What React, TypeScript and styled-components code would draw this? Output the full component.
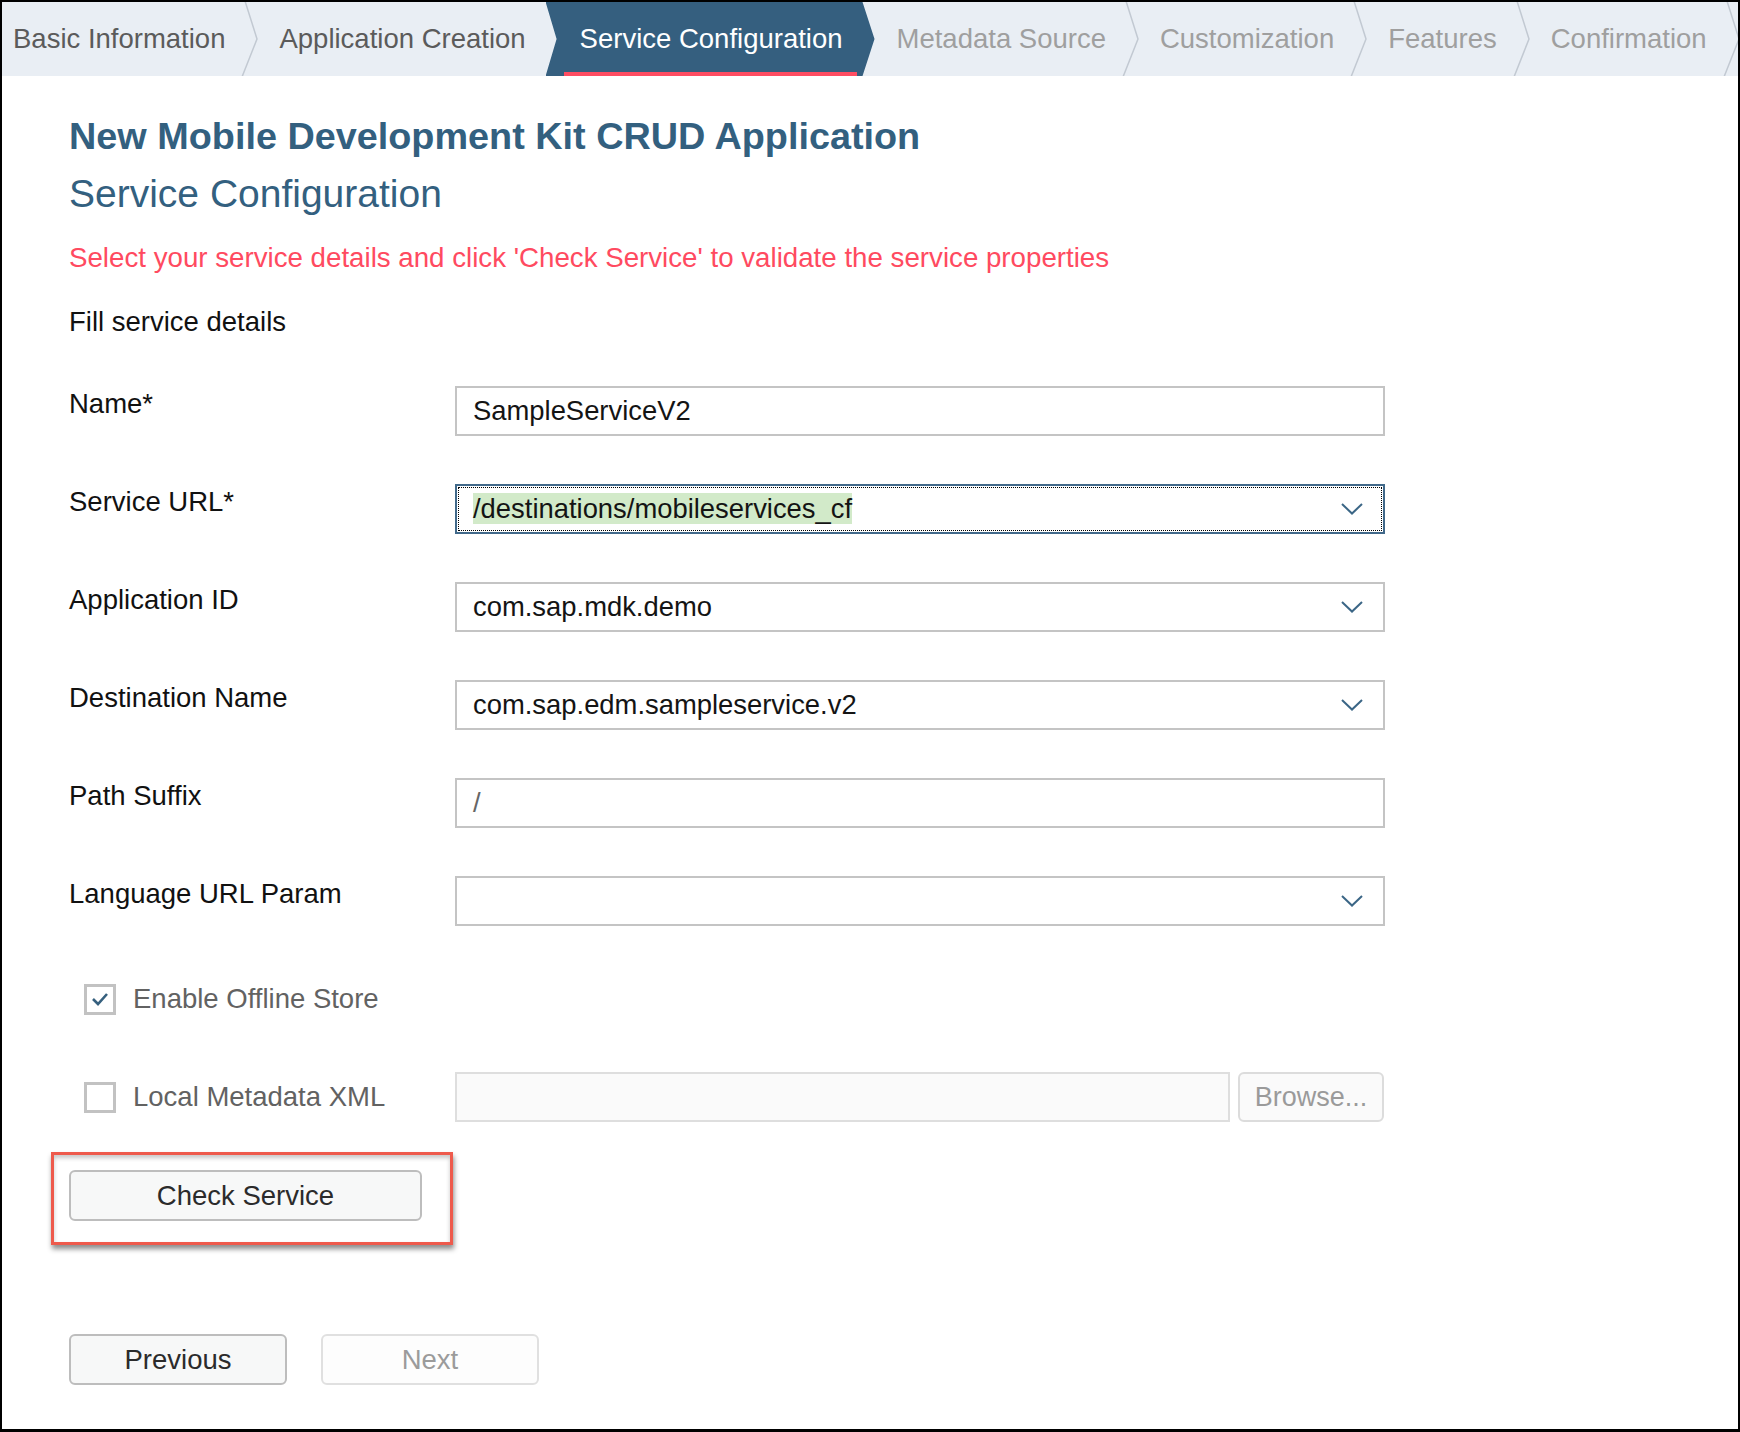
import React from "react";
import styled, { createGlobalStyle, css } from "styled-components";

const GlobalStyle = createGlobalStyle`
  html, body { margin: 0; padding: 0; background: #ffffff; }
  body { font-family: "Liberation Sans", Arial, sans-serif; }
  * { box-sizing: border-box; }
`;

const FONT = `"Liberation Sans", Arial, sans-serif`;

const Page = styled.div`
  width: 1740px;
  height: 1432px;
  border: 2px solid #000;
  border-bottom-width: 3px;
  background: #fff;
  font-family: ${FONT};
  overflow: hidden;
`;

const StepBar = styled.nav`
  display: flex;
  height: 74px;
  background: #e9eef4;
  overflow: hidden;
`;

type StepState = "done" | "active" | "todo";

const Step = styled.div<{ $state: StepState; $first?: boolean }>`
  position: relative;
  display: flex;
  align-items: center;
  height: 100%;
  padding: 0 20px 0 ${(p) => (p.$first ? 11 : 34)}px;
  font-size: 27.5px;
  white-space: nowrap;
  color: ${(p) =>
    p.$state === "done" ? "#5b5b5b" : p.$state === "active" ? "#ffffff" : "#9f9f9f"};
  z-index: ${(p) => (p.$state === "active" ? 2 : 1)};
  ${(p) =>
    p.$state === "active" &&
    css`
      &::before {
        content: "";
        position: absolute;
        top: 0;
        bottom: 0;
        left: 0;
        right: -12px;
        background: #355f7f;
        clip-path: polygon(0 0, calc(100% - 12px) 0, 100% 50%, calc(100% - 12px) 100%, 0 100%, 11px 50%);
      }
      &::after {
        content: "";
        position: absolute;
        left: 18px;
        right: 6px;
        bottom: 0;
        height: 4px;
        background: #ff4d62;
      }
    `}
`;

const StepText = styled.span`
  position: relative;
`;

const Separator = styled.svg`
  position: absolute;
  top: 0;
  left: 100%;
  width: 14px;
  height: 100%;
  overflow: visible;
`;

const Content = styled.main`
  display: flex;
  flex-direction: column;
  align-items: flex-start;
  padding: 0 0 0 67px;
`;

const Title = styled.h1`
  margin: 37px 0 0;
  font-size: 37.8px;
  line-height: 46px;
  font-weight: 700;
  color: #33607f;
`;

const Subtitle = styled.h2`
  margin: 11px 0 0;
  font-size: 39px;
  line-height: 47px;
  font-weight: 400;
  color: #33607f;
`;

const Instruction = styled.p`
  margin: 24px 0 0;
  font-size: 27.7px;
  line-height: 33px;
  color: #ff4a60;
`;

const SectionLabel = styled.p`
  margin: 31px 0 0;
  font-size: 27.5px;
  line-height: 33px;
  color: #111;
`;

const Form = styled.div`
  margin-top: 48px;
  display: grid;
  grid-template-columns: 386px 930px;
  grid-auto-rows: 50px;
  row-gap: 48px;
`;

const FieldLabel = styled.label`
  align-self: start;
  padding-top: 1px;
  font-size: 27.5px;
  line-height: 33px;
  color: #111;
`;

const Field = styled.div<{ $focused?: boolean; $select?: boolean }>`
  position: relative;
  display: flex;
  align-items: center;
  height: 50px;
  padding: 0 16px;
  border: 2px solid ${(p) => (p.$focused ? "#41698a" : "#c4c4c4")};
  background: #fff;
  font-size: 27.4px;
  color: #141414;
  ${(p) =>
    p.$focused &&
    css`
      outline: 1px dotted #000;
      outline-offset: -4px;
    `}
`;

const FieldValue = styled.span<{ $muted?: boolean }>`
  flex: 1;
  white-space: nowrap;
  color: ${(p) => (p.$muted ? "#666" : "#141414")};
`;

const Highlight = styled.span`
  background: #d2eac9;
`;

const Chevron = styled.svg`
  flex: none;
  width: 22px;
  height: 12px;
  margin-right: 4px;
`;

const CheckRow = styled.label`
  display: flex;
  align-items: center;
  gap: 17px;
  padding-left: 15px;
  font-size: 27.5px;
  color: #626262;
`;

const CheckBox = styled.span<{ $checked?: boolean }>`
  display: flex;
  align-items: center;
  justify-content: center;
  width: 32px;
  height: 31px;
  border: 3px solid #c2c2c2;
  background: #fff;
`;

const FileRow = styled.div`
  display: flex;
  gap: 8px;
  height: 50px;
`;

const FileField = styled.div`
  width: 775px;
  border: 2px solid #dedede;
  background: #fafafa;
`;

const BrowseButton = styled.button`
  width: 146px;
  height: 50px;
  border: 2px solid #dcdcdc;
  border-radius: 6px;
  background: #fafafa;
  font-family: ${FONT};
  font-size: 27px;
  color: #9a9a9a;
  padding: 0;
`;

const Callout = styled.div`
  margin: 30px 0 0 -18px;
  padding: 15px 28px 21px 15px;
  border: 3px solid #ee5a4c;
  box-shadow: 1px 4px 5px rgba(0, 0, 0, 0.45), inset 0 3px 4px rgba(0, 0, 0, 0.22);
`;

const Button = styled.button<{ $disabled?: boolean; $width: number }>`
  width: ${(p) => p.$width}px;
  height: 51px;
  border: 2px solid ${(p) => (p.$disabled ? "#e0e0e0" : "#bdbdbd")};
  border-radius: 6px;
  background: ${(p) => (p.$disabled ? "#fdfdfd" : "#f7f8f8")};
  font-family: ${FONT};
  font-size: 27.5px;
  color: ${(p) => (p.$disabled ? "#9b9b9b" : "#2b2b2b")};
  padding: 0;
`;

const NavButtons = styled.div`
  display: flex;
  gap: 34px;
  margin-top: 89px;
`;

const steps: { label: string; state: StepState }[] = [
  { label: "Basic Information", state: "done" },
  { label: "Application Creation", state: "done" },
  { label: "Service Configuration", state: "active" },
  { label: "Metadata Source", state: "todo" },
  { label: "Customization", state: "todo" },
  { label: "Features", state: "todo" },
  { label: "Confirmation", state: "todo" },
];

const ChevronDown = () => (
  <Chevron viewBox="0 0 22 12" fill="none">
    <polyline points="1,1 11,10.5 21,1" stroke="#3b6686" strokeWidth="2" />
  </Chevron>
);

type FieldDef = {
  label: string;
  value?: React.ReactNode;
  select?: boolean;
  focused?: boolean;
  muted?: boolean;
};

const fields: FieldDef[] = [
  { label: "Name*", value: "SampleServiceV2" },
  {
    label: "Service URL*",
    value: <Highlight>/destinations/mobileservices_cf</Highlight>,
    select: true,
    focused: true,
  },
  { label: "Application ID", value: "com.sap.mdk.demo", select: true },
  { label: "Destination Name", value: "com.sap.edm.sampleservice.v2", select: true },
  { label: "Path Suffix", value: "/", muted: true },
  { label: "Language URL Param", value: "", select: true },
];

export default function App() {
  return (
    <>
      <GlobalStyle />
      <Page>
        <StepBar>
          {steps.map((s, i) => {
            const next = steps[i + 1];
            const showSep = s.state !== "active" && !(next && next.state === "active");
            return (
              <Step key={s.label} $state={s.state} $first={i === 0}>
                <StepText>{s.label}</StepText>
                {showSep && (
                  <Separator viewBox="0 0 14 74" preserveAspectRatio="none">
                    <polyline
                      points="0,-1 12,37 -3,75"
                      fill="none"
                      stroke="#c2c9d2"
                      strokeWidth="1.5"
                    />
                  </Separator>
                )}
              </Step>
            );
          })}
        </StepBar>

        <Content>
          <Title>New Mobile Development Kit CRUD Application</Title>
          <Subtitle>Service Configuration</Subtitle>
          <Instruction>
            Select your service details and click 'Check Service' to validate the service properties
          </Instruction>
          <SectionLabel>Fill service details</SectionLabel>

          <Form>
            {fields.map((f) => (
              <React.Fragment key={f.label}>
                <FieldLabel>{f.label}</FieldLabel>
                <Field $focused={f.focused} $select={f.select}>
                  <FieldValue $muted={f.muted}>{f.value}</FieldValue>
                  {f.select && <ChevronDown />}
                </Field>
              </React.Fragment>
            ))}

            <CheckRow>
              <CheckBox $checked>
                <svg width="20" height="16" viewBox="0 0 20 16" fill="none">
                  <polyline points="3,8 8,13 17,3" stroke="#36607e" strokeWidth="2.6" />
                </svg>
              </CheckBox>
              Enable Offline Store
            </CheckRow>
            <div />

            <CheckRow>
              <CheckBox />
              Local Metadata XML
            </CheckRow>
            <FileRow>
              <FileField />
              <BrowseButton>Browse...</BrowseButton>
            </FileRow>
          </Form>

          <Callout>
            <Button $width={353}>Check Service</Button>
          </Callout>

          <NavButtons>
            <Button $width={218}>Previous</Button>
            <Button $width={218} $disabled>
              Next
            </Button>
          </NavButtons>
        </Content>
      </Page>
    </>
  );
}
